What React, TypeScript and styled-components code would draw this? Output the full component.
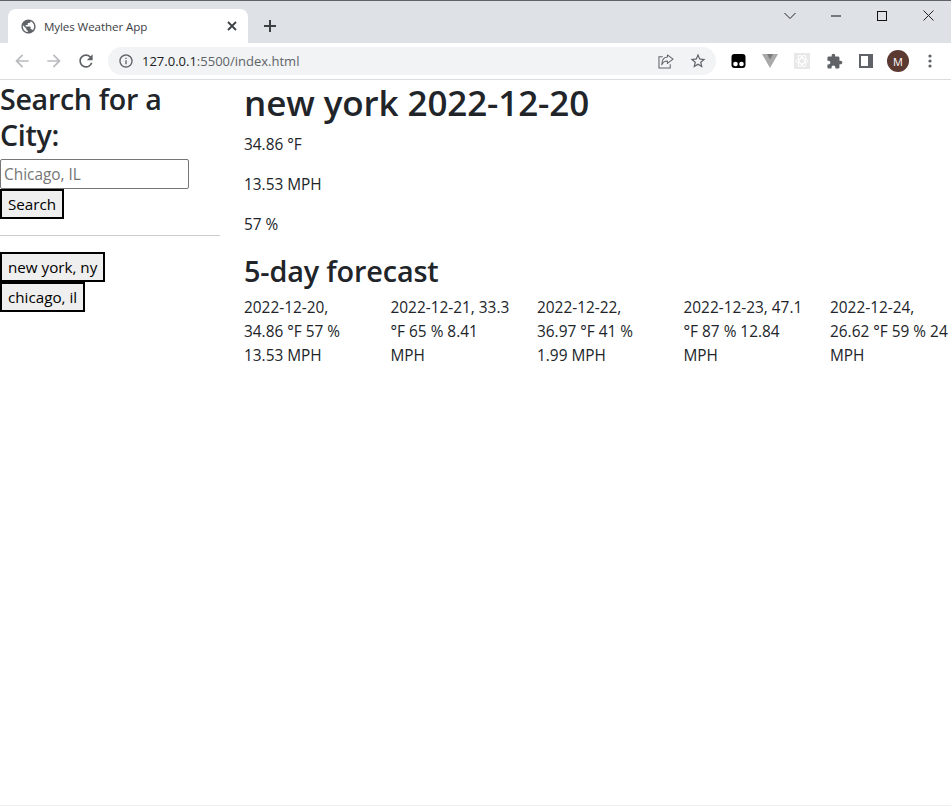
import React from "react";
import styled, { createGlobalStyle } from "styled-components";

const Global = createGlobalStyle`
  html, body { margin: 0; padding: 0; background: #fff; }
  body { font-family: "Open Sans", "Noto Sans", sans-serif; color: #212529; overflow: hidden; }
  * { box-sizing: border-box; }
`;
const Page = styled.div`width: 951px; height: 806px; display: flex; flex-direction: column; border-bottom: 1px solid #eee;`;
const TitleBar = styled.div`height: 43px; background: #dee1e6; border-top: 1px solid #5f6368; display: flex; align-items: flex-end; padding-left: 8px;`;
const Tab = styled.div`width: 240px; height: 34px; background: #fff; border-radius: 8px 8px 0 0; display: flex; align-items: center; padding: 0 9px 0 12px; gap: 7px;`;
const TabIcon = styled.span`display: flex; color: #5f6368;`;
const TabTitle = styled.span`flex: 1; font: 11.6px "Open Sans", sans-serif; color: #3c4043; letter-spacing: -0.1px;`;
const NewTab = styled.div`width: 44px; height: 34px; display: flex; align-items: center; justify-content: center; color: #3c4043;`;
const Spacer = styled.div`flex: 1;`;
const WindowControls = styled.div`display: flex; align-self: flex-start; align-items: center; height: 29px; color: #111;`;
const WinBtn = styled.div`width: 46px; display: flex; justify-content: center;`;
const Toolbar = styled.div`height: 37px; border-bottom: 1px solid #dadce0; display: flex; align-items: center; padding-left: 6px; color: #5f6368;`;
const NavIcon = styled.div<{ $off?: boolean }>`width: 32px; display: flex; justify-content: center; color: ${p => p.$off ? "#b9bbbe" : "#5f6368"};`;
const Mirror = styled.span`display: flex; transform: scaleX(-1);`;
const Omnibox = styled.div`width: 608px; height: 28px; margin-left: 6px; border-radius: 14px; background: #f1f3f4; display: flex; align-items: center; padding: 0 2px 0 10px;`;
const Url = styled.span`flex: 1; margin-left: 8px; font: 13px "Open Sans", sans-serif; color: #5f6368; b { font-weight: 400; color: #202124; }`;
const OmniIcon = styled.div`width: 32px; display: flex; justify-content: center; color: #5f6368;`;
const Exts = styled.div`display: flex; align-items: center; margin-left: 6px; color: #5f6368;`;
const Ext = styled.div`width: 32px; display: flex; justify-content: center; align-items: center;`;
const Avatar = styled.div`width: 22px; height: 22px; border-radius: 50%; background: #5b3a32; color: #fff; font: 11px "Open Sans", sans-serif; display: flex; align-items: center; justify-content: center;`;
const Body = styled.div`flex: 1; display: flex; align-items: flex-start;`;
const Sidebar = styled.aside`width: 220px; flex: none; padding-top: 1px;`;
const SideTitle = styled.h2`margin: 0 0 6px; font-size: 28.6px; line-height: 36px; font-weight: 600; letter-spacing: -0.3px; color: #212529;`;
const CityInput = styled.input`display: block; width: 189px; height: 30px; padding: 1px 3px; border: 1px solid #767676; border-radius: 2px; font: 15.4px "Open Sans", sans-serif; &::placeholder { color: #757575; }`;
const Btn = styled.button`display: block; height: 30px; padding: 0 6px; border: 2px solid #000; background: #efefef; color: #000; font: 15.2px/24px "Open Sans", sans-serif; white-space: nowrap;`;
const Rule = styled.hr`margin: 16px 0; border: 0; border-top: 1px solid #ccc; height: 0;`;
const Main = styled.main`flex: 1; padding-left: 24px; min-width: 0;`;
const CityTitle = styled.h1`margin: -1px 0 6px; font-size: 35px; line-height: 48px; font-weight: 600; letter-spacing: -0.1px; color: #212529;`;
const Stat = styled.p`margin: 0 0 16px; font-size: 15.4px; line-height: 24px;`;
const SubTitle = styled.h2`margin: 1px 0 7px; font-size: 28.8px; line-height: 36px; font-weight: 600; letter-spacing: -0.15px;`;
const Forecast = styled.div`display: grid; grid-template-columns: repeat(5, 146.5px); width: 733px;`;
const Day = styled.div`font-size: 15.4px; line-height: 24px; padding-right: 24px;`;

const days = [
  "2022-12-20, 34.86 °F 57 % 13.53 MPH",
  "2022-12-21, 33.3 °F 65 % 8.41 MPH",
  "2022-12-22, 36.97 °F 41 % 1.99 MPH",
  "2022-12-23, 47.1 °F 87 % 12.84 MPH",
  "2022-12-24, 26.62 °F 59 % 24 MPH",
];

const Mi = ({ d, size = 20 }: { d: string; size?: number }) => (
  <svg width={size} height={size} viewBox="0 0 24 24" fill="currentColor"><path d={d} /></svg>
);
const ARROW = "M20 11H7.83l5.59-5.59L12 4l-8 8 8 8 1.41-1.41L7.83 13H20v-2z";
const REFRESH = "M17.65 6.35A7.958 7.958 0 0 0 12 4c-4.42 0-7.99 3.58-7.99 8s3.57 8 7.99 8c3.73 0 6.84-2.55 7.73-6h-2.08A5.99 5.99 0 0 1 12 18c-3.31 0-6-2.69-6-6s2.69-6 6-6c1.66 0 3.14.69 4.22 1.78L13 11h7V4l-2.35 2.35z";
const GLOBE = "M12 2C6.48 2 2 6.48 2 12s4.48 10 10 10 10-4.48 10-10S17.52 2 12 2zm-1 17.93c-3.95-.49-7-3.85-7-7.93 0-.62.08-1.21.21-1.79L9 15v1c0 1.1.9 2 2 2v1.93zm6.9-2.54c-.26-.81-1-1.39-1.9-1.39h-1v-3c0-.55-.45-1-1-1H8v-2h2c.55 0 1-.45 1-1V7h2c1.1 0 2-.9 2-2v-.41c2.93 1.19 5 4.06 5 7.41 0 2.08-.8 3.97-2.1 5.39z";
const INFO = "M11 7h2v2h-2zm0 4h2v6h-2zm1-9C6.48 2 2 6.48 2 12s4.48 10 10 10 10-4.48 10-10S17.52 2 12 2zm0 18c-4.41 0-8-3.59-8-8s3.59-8 8-8 8 3.59 8 8-3.59 8-8 8z";
const STAR = "M22 9.24l-7.19-.62L12 2 9.19 8.63 2 9.24l5.46 4.73L5.82 21 12 17.27 18.18 21l-1.63-7.03L22 9.24zM12 15.4l-3.76 2.27 1-4.28-3.32-2.88 4.38-.38L12 6.1l1.71 4.04 4.38.38-3.32 2.88 1 4.28L12 15.4z";
const PUZZLE = "M20.5 11H19V7c0-1.1-.9-2-2-2h-4V3.5C13 2.12 11.88 1 10.5 1S8 2.12 8 3.5V5H4c-1.1 0-1.99.9-1.99 2v3.8H3.5c1.49 0 2.7 1.21 2.7 2.7s-1.21 2.7-2.7 2.7H2V20c0 1.1.9 2 2 2h3.8v-1.5c0-1.49 1.21-2.7 2.7-2.7 1.49 0 2.7 1.21 2.7 2.7V22H17c1.1 0 2-.9 2-2v-4h1.5c1.38 0 2.5-1.12 2.5-2.5S21.88 11 20.5 11z";

export default function App() {
  return (
    <Page>
      <Global />
      <TitleBar>
        <Tab>
          <TabIcon><Mi d={GLOBE} size={17} /></TabIcon>
          <TabTitle>Myles Weather App</TabTitle>
          <svg width="14" height="14" viewBox="0 0 14 14"><path d="M3 3l8 8M11 3l-8 8" stroke="#3c4043" strokeWidth="1.8" /></svg>
        </Tab>
        <NewTab>
          <svg width="12" height="12" viewBox="0 0 12 12"><path d="M6 0v12M0 6h12" stroke="#3c4043" strokeWidth="2" /></svg>
        </NewTab>
        <Spacer />
        <WindowControls>
          <WinBtn><svg width="12" height="8" viewBox="0 0 12 8" fill="none"><path d="M.5 1L6 6.5 11.500 1" stroke="#222" /></svg></WinBtn>
          <WinBtn><svg width="10" height="2" viewBox="0 0 10 2"><path d="M0 1h10" stroke="#111" /></svg></WinBtn>
          <WinBtn><svg width="10" height="10" viewBox="0 0 10 10" fill="none"><rect x=".5" y=".5" width="9" height="9" stroke="#111" /></svg></WinBtn>
          <WinBtn><svg width="11" height="11" viewBox="0 0 11 11" fill="none"><path d="M.5.5l10 10M10.500.5l-10 10" stroke="#222" /></svg></WinBtn>
        </WindowControls>
      </TitleBar>
      <Toolbar>
        <NavIcon $off><Mi d={ARROW} /></NavIcon>
        <NavIcon $off><Mirror><Mi d={ARROW} /></Mirror></NavIcon>
        <NavIcon><Mi d={REFRESH} /></NavIcon>
        <Omnibox>
          <Mi d={INFO} size={16} />
          <Url><b>127.0.0.1</b>:5500/index.html</Url>
          <OmniIcon>
            <svg width="16" height="15" viewBox="0 0 17 16" fill="none" stroke="currentColor" strokeWidth="1.1"><path d="M5 3H1v12h12v-4" /><path d="M10 1l6 4.500-6 4.500V7.500C7 7.500 5 9 4 11.500 4 7 6 3.500 10 3.200z" strokeLinejoin="round" /></svg>
          </OmniIcon>
          <OmniIcon><Mi d={STAR} size={18} /></OmniIcon>
        </Omnibox>
        <Exts>
          <Ext><svg width="15" height="14" viewBox="0 0 15 14"><rect x=".5" width="14" height="14" rx="3" fill="#000" /><circle cx="4.500" cy="10" r="2.300" fill="#fff" /><circle cx="10.500" cy="10" r="2.300" fill="#fff" /></svg></Ext>
          <Ext><svg width="16" height="14" viewBox="0 0 16 14"><path d="M0 0h16L8 14z" fill="#a9a9a9" /><path d="M5 0h6L8 5.500z" fill="#7a7a7a" /></svg></Ext>
          <Ext><svg width="16" height="16" viewBox="0 0 16 16"><rect width="16" height="16" fill="#e8e8e8" /><g fill="none" stroke="#fff"><ellipse cx="8" cy="8" rx="6" ry="2.500" /><ellipse cx="8" cy="8" rx="6" ry="2.500" transform="rotate(60 8 8)" /><ellipse cx="8" cy="8" rx="6" ry="2.500" transform="rotate(120 8 8)" /></g></svg></Ext>
          <Ext><Mi d={PUZZLE} size={17} /></Ext>
          <Ext><svg width="14" height="14" viewBox="0 0 14 14"><path fillRule="evenodd" d="M0 0h14v14H0zM2 2v10h7V2z" fill="#5f6368" /></svg></Ext>
          <Ext><Avatar>M</Avatar></Ext>
          <Ext><svg width="4" height="14" viewBox="0 0 4 14" fill="#5f6368"><circle cx="2" cy="2" r="1.600" /><circle cx="2" cy="7" r="1.600" /><circle cx="2" cy="12" r="1.600" /></svg></Ext>
        </Exts>
      </Toolbar>
      <Body>
        <Sidebar>
          <SideTitle>Search for a City:</SideTitle>
          <CityInput placeholder="Chicago, IL" />
          <Btn>Search</Btn>
          <Rule />
          <Btn>new york, ny</Btn>
          <Btn>chicago, il</Btn>
        </Sidebar>
        <Main>
          <CityTitle>new york 2022-12-20</CityTitle>
          <Stat>34.86 °F</Stat>
          <Stat>13.53 MPH</Stat>
          <Stat>57 %</Stat>
          <SubTitle>5-day forecast</SubTitle>
          <Forecast>
            {days.map(d => <Day key={d}>{d}</Day>)}
          </Forecast>
        </Main>
      </Body>
    </Page>
  );
}
